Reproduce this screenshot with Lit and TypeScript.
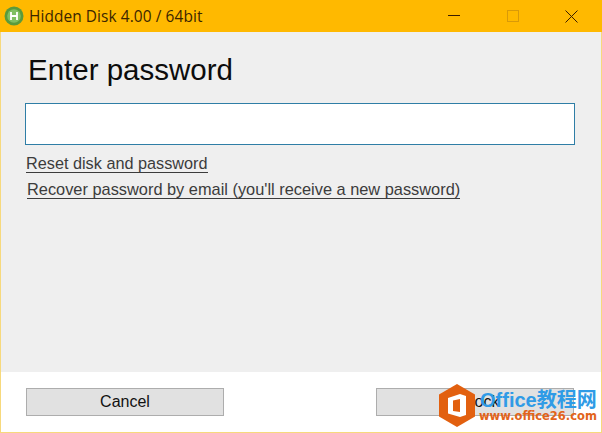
import { LitElement, html, css } from "lit";
import { customElement } from "lit/decorators.js";

@customElement("app-root")
export class AppRoot extends LitElement {
  static styles = css`
    :host { display: block; width: 602px; height: 433px; position: relative; overflow: hidden; font-family: "Liberation Sans", Arial, sans-serif; }
    .win { box-sizing: border-box; width: 602px; height: 433px; display: flex; flex-direction: column; background: #ffb900; }
    .titlebar { height: 32px; flex: none; display: flex; align-items: center; background: #ffb900; }
    .logo { margin-left: 4px; width: 20px; height: 20px; flex: none; display: block; }
    .title { margin-left: 5px; font: 15.4px "Open Sans", "Noto Sans", sans-serif; letter-spacing: 0.1px; color: #3b2600; white-space: nowrap; flex: 1; }
    .ctrls { display: flex; margin-right: 1px; }
    .ctrl { width: 59px; height: 32px; display: flex; align-items: center; justify-content: center; }
    .edge { background: #f7d97c; padding: 0 1px 1px; flex: 1; display: flex; flex-direction: column; min-height: 0; }
    .inner { flex: 1; display: flex; flex-direction: column; background: #fff; min-height: 0; }
    .main { height: 340px; flex: none; box-sizing: border-box; background: #efefef; padding: 20px 0 0 24px; }
    h1 { margin: 0 0 0 3px; font-weight: 400; font-size: 29.5px; line-height: 36px; color: #0c0c0c; }
    .field { box-sizing: border-box; width: 550px; height: 42px; margin-top: 15px; background: #fff; border: 1px solid #2f7ea6; }
    .links { display: flex; flex-direction: column; align-items: flex-start; margin-top: 9px; gap: 7px; }
    a { display: block; font-size: 16.25px; line-height: 18px; color: #3c3c3c; text-decoration: none; border-bottom: 1px solid #3c3c3c; margin-left: 1px; }
    a + a { margin-left: 2px; font-size: 16.38px; }
    .footer { flex: 1; display: flex; justify-content: space-between; align-items: flex-start; padding: 16px 27px 0 25px; }
    button { box-sizing: border-box; width: 198px; height: 28px; padding: 0; background: #e1e1e1; border: 1px solid #adadad; font: 16px "Liberation Sans", Arial, sans-serif; color: #111; }
    .wm { position: absolute; left: 439px; top: 384px; width: 160px; height: 44px; }
    .hex { position: absolute; left: 0; top: 0; width: 36px; height: 43px; display: block; }
    .wm-a { position: absolute; left: 41px; top: 2px; font: 700 20px/28px "Liberation Sans", "Noto Sans CJK SC", sans-serif; color: #2f9be6; white-space: nowrap; }
    .wm-b { position: absolute; left: 40px; top: 24px; font: 700 11.5px/16px "DejaVu Sans", sans-serif; color: #e2641a; white-space: nowrap; }
  `;

  render() {
    return html`
      <div class="win">
        <div class="titlebar">
          <svg class="logo" viewBox="0 0 20 20">
            <circle cx="10" cy="10" r="9.5" fill="#5a9a3c" />
            <circle cx="10" cy="10" r="6.8" fill="#7fbf62" />
            <path d="M7 6v8M13 6v8M7 10h6" stroke="#fff" stroke-width="1.8" fill="none" />
          </svg>
          <div class="title">Hidden Disk 4.00 / 64bit</div>
          <div class="ctrls">
            <div class="ctrl"><svg width="12" height="12" viewBox="0 0 12 12"><path d="M0 5.5h12" stroke="#3a1d00" stroke-width="1" /></svg></div>
            <div class="ctrl"><svg width="12" height="12" viewBox="0 0 12 12"><rect x=".5" y=".5" width="11" height="11" fill="none" stroke="#d99a08" /></svg></div>
            <div class="ctrl"><svg width="13" height="13" viewBox="0 0 13 13"><path d="M.5.5l12 12M12.5.5l-12 12" stroke="#3a1d00" stroke-width="1" /></svg></div>
          </div>
        </div>
        <div class="edge">
          <div class="inner">
            <div class="main">
              <h1>Enter password</h1>
              <div class="field"></div>
              <div class="links">
                <a>Reset disk and password</a>
                <a>Recover password by email (you'll receive a new password)</a>
              </div>
            </div>
            <div class="footer">
              <button>Cancel</button>
              <button>Unlock</button>
            </div>
          </div>
        </div>
      </div>
      <div class="wm">
        <svg class="hex" viewBox="0 0 36 43">
          <path d="M18 0L36 10.5V32.5L18 43L0 32.5V10.5Z" fill="#e2600f" />
          <path d="M9 14L21 10L27 12V31L21 33L9 29.5Z" fill="#fff" />
          <path d="M14 16.5L21 15V28L14 27Z" fill="#e2600f" />
        </svg>
        <div class="wm-a">Office教程网</div>
        <div class="wm-b">www.office26.com</div>
      </div>
    `;
  }
}
